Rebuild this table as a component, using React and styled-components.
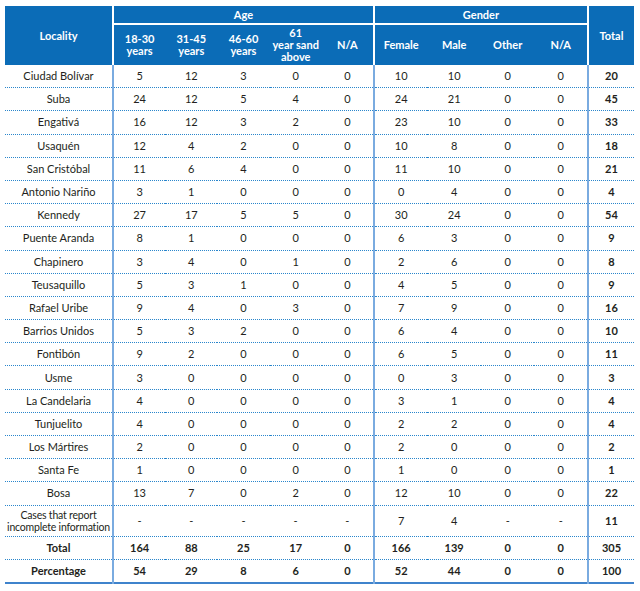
import React from 'react'
import styled, { createGlobalStyle } from 'styled-components'

const GlobalStyle = createGlobalStyle`
  body {
    margin: 0;
    background: #fff;
    font-family: Lato, "Open Sans", sans-serif;
  }
`

const rows = [
  ['Ciudad Bolívar', 5, 12, 3, 0, 0, 10, 10, 0, 0, 20],
  ['Suba', 24, 12, 5, 4, 0, 24, 21, 0, 0, 45],
  ['Engativá', 16, 12, 3, 2, 0, 23, 10, 0, 0, 33],
  ['Usaquén', 12, 4, 2, 0, 0, 10, 8, 0, 0, 18],
  ['San Cristóbal', 11, 6, 4, 0, 0, 11, 10, 0, 0, 21],
  ['Antonio Nariño', 3, 1, 0, 0, 0, 0, 4, 0, 0, 4],
  ['Kennedy', 27, 17, 5, 5, 0, 30, 24, 0, 0, 54],
  ['Puente Aranda', 8, 1, 0, 0, 0, 6, 3, 0, 0, 9],
  ['Chapinero', 3, 4, 0, 1, 0, 2, 6, 0, 0, 8],
  ['Teusaquillo', 5, 3, 1, 0, 0, 4, 5, 0, 0, 9],
  ['Rafael Uribe', 9, 4, 0, 3, 0, 7, 9, 0, 0, 16],
  ['Barrios Unidos', 5, 3, 2, 0, 0, 6, 4, 0, 0, 10],
  ['Fontibón', 9, 2, 0, 0, 0, 6, 5, 0, 0, 11],
  ['Usme', 3, 0, 0, 0, 0, 0, 3, 0, 0, 3],
  ['La Candelaria', 4, 0, 0, 0, 0, 3, 1, 0, 0, 4],
  ['Tunjuelito', 4, 0, 0, 0, 0, 2, 2, 0, 0, 4],
  ['Los Mártires', 2, 0, 0, 0, 0, 2, 0, 0, 0, 2],
  ['Santa Fe', 1, 0, 0, 0, 0, 1, 0, 0, 0, 1],
  ['Bosa', 13, 7, 0, 2, 0, 12, 10, 0, 0, 22],
]

const summary = [
  ['Total', 164, 88, 25, 17, 0, 166, 139, 0, 0, 305],
  ['Percentage', 54, 29, 8, 6, 0, 52, 44, 0, 0, 100],
]

const Table = styled.table`
  border-collapse: collapse;
  table-layout: fixed;
  width: 629px;
  margin: 6px 0 0 5px;
  color: #231f20;
  font-size: 11px;
`

const Head = styled.th`
  background: #0b6cb7;
  color: #fff;
  font-weight: bold;
  font-size: 11px;
  line-height: 12px;
  text-align: center;
  padding: 0 2px;
  height: ${p => p.$h || 17}px;
  border-left: ${p => (p.$sep ? '2px solid #fff' : 'none')};
  border-bottom: ${p => (p.$under ? '2px solid #fff' : 'none')};
`

const Row = styled.tr`
  border-bottom: ${p => (p.$last ? '2px solid #3f83cc' : '1px dotted #2a86cc')};
`

const Cell = styled.td`
  text-align: center;
  height: ${p => p.$h || 22.2}px;
  padding: 0;
  line-height: 12px;
  white-space: nowrap;
  font-weight: ${p => (p.$bold ? 'bold' : 'normal')};
  border-left: ${p => (p.$sep ? '2px solid #7aabe0' : 'none')};
`

const Note = styled.span`
  font-size: 10.5px;
  letter-spacing: -0.2px;
`

const sepAt = i => i === 1 || i === 6 || i === 10

function DataRow({ data, bold, last, h }) {
  return (
    <Row $last={last}>
      {data.map((v, i) => (
        <Cell key={i} $sep={sepAt(i)} $bold={bold || i === 10} $h={h}>
          {v}
        </Cell>
      ))}
    </Row>
  )
}

export default function App() {
  return (
    <>
      <GlobalStyle />
      <Table>
        <colgroup>
          <col style={{ width: 108 }} />
          {[0, 1, 2, 3, 4].map(i => <col key={'a' + i} style={{ width: 52.2 }} />)}
          {[0, 1, 2, 3].map(i => <col key={'g' + i} style={{ width: 53.5 }} />)}
          <col style={{ width: 46 }} />
        </colgroup>
        <thead>
          <tr>
            <Head rowSpan={2}>Locality</Head>
            <Head colSpan={5} $sep $under>Age</Head>
            <Head colSpan={4} $sep $under>Gender</Head>
            <Head rowSpan={2} $sep>Total</Head>
          </tr>
          <tr>
            <Head $h={40} $sep>18-30<br />years</Head>
            <Head $h={40}>31-45<br />years</Head>
            <Head $h={40}>46-60<br />years</Head>
            <Head $h={40}>61<br />year sand<br />above</Head>
            <Head $h={40}>N/A</Head>
            <Head $h={40} $sep>Female</Head>
            <Head $h={40}>Male</Head>
            <Head $h={40}>Other</Head>
            <Head $h={40}>N/A</Head>
          </tr>
        </thead>
        <tbody>
          {rows.map(r => <DataRow key={r[0]} data={r} />)}
          <DataRow
            h={30}
            data={[<Note>Cases that report<br />incomplete information</Note>, '-', '-', '-', '-', '-', 7, 4, '-', '-', 11]}
          />
          <DataRow data={summary[0]} bold />
          <DataRow data={summary[1]} bold last />
        </tbody>
      </Table>
    </>
  )
}
